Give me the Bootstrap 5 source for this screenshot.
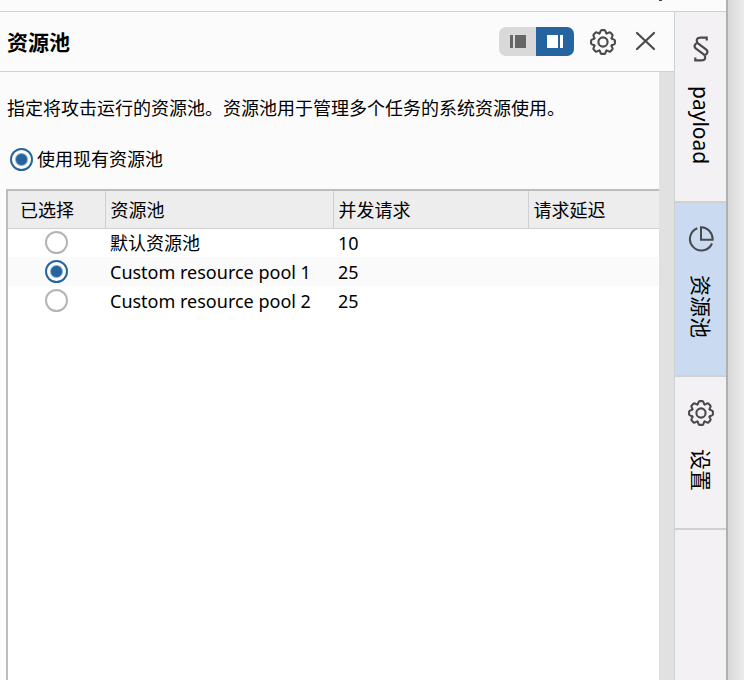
<!DOCTYPE html>
<html lang="zh-CN">
<head>
<meta charset="utf-8">
<meta name="viewport" content="width=device-width, initial-scale=1">
<title>资源池</title>
<link href="https://cdn.jsdelivr.net/npm/bootstrap@5.3.0/dist/css/bootstrap.min.css" rel="stylesheet">
<style>
  body { font-family: "Noto Sans", "Noto Sans CJK SC", sans-serif; font-size: 18px; line-height: 28px; color: #000; background: #e6e6e6; }
  .backdrop { background: linear-gradient(to left, #ececec, #d8d8d8 16px); padding-right: 16px; }
  .window { background: #fbfbfb; border-right: 2px solid #b0b0b0; }
  .top-strip { height: 12px; border-bottom: 1px solid #cbd3d0; padding-right: 64px; }
  .strip-mark { width: 3px; height: 1px; background: #444; }
  .pane-head { height: 60px; border-bottom: 1px solid #cbd3d0; padding: 0 16px 0 7px; }
  .pane-title { font-size: 21px; line-height: 28px; }
  .dock-btn { width: 38px; height: 29px; border: 0; border-radius: 7px; background: #d9d9d9; color: #666; }
  .dock-btn.active, .dock-btn:hover { background: #d9d9d9; }
  .dock-btn.active { background: #25649f !important; color: #fff; }
  .tool-btn { border: 0; color: #4a4a4a; }
  .pane-body { padding: 22px 0 0 6px; }
  .intro { margin-bottom: 23px; padding-left: 1px; }
  .track { width: 15px; background: #e1e1e1; }
  .pool-radio.form-check-input { width: 23px; height: 23px; margin: 0; border: 2px solid #b4b4b4; background: #fff; flex: none; float: none; display: block; box-shadow: none; }
  .pool-radio.form-check-input:checked { border-color: #25649f; background: radial-gradient(circle, #25649f 5px, #fff 7px); }
  .table-frame { border: solid #c0bcbe; border-width: 2px 0 0 2px; background: #fff; }
  .pool-table { table-layout: fixed; --bs-table-bg: transparent; }
  .pool-table th { height: 37px; padding: 2px 5px 0; font-weight: 400; background: #ededed; border-bottom: 1px solid #cfcfcf; border-right: 1px solid #cfcfcf; vertical-align: middle; color: #000; }
  .pool-table th:last-child { border-right: 0; }
  .pool-table th:first-child { padding-left: 12px; }
  .pool-table td { height: 29px; padding: 0 5px; line-height: 28px; border: 0; color: #000; white-space: nowrap; }
  .pool-table tbody tr:nth-child(2) td { background: #fafafa; }
  .col-select { width: 97px; }
  .col-pool { width: 228px; }
  .col-count { width: 195px; }
  .side-tabs { width: 52px; background: #f3f1f3; border-left: 1px solid #cbd3d0; }
  .side-tab { border: 0; border-bottom: 2px solid #d0d2d1; background: transparent; padding: 23px 0 37px; gap: 23px; color: #000; font-size: 21px; line-height: 28px; }
  .side-tab.active { background: #cadaf0; }
  .side-tab svg { color: #4a4a4a; }
  .tab-label { writing-mode: vertical-rl; text-orientation: sideways; }
</style>
</head>
<body>
<svg class="d-none" aria-hidden="true">
  <defs>
    <path id="tooth" d="M-3.56-8.59C-2.5-9.05-2.9-11.9-1.5-11.9L1.5-11.9C2.9-11.9 2.5-9.05 3.56-8.59"/>
    <symbol id="gear" viewBox="-13 -13 26 26">
      <g fill="none" stroke="currentColor" stroke-width="2.1" stroke-linecap="round">
        <use href="#tooth"/><use href="#tooth" transform="rotate(45)"/><use href="#tooth" transform="rotate(90)"/><use href="#tooth" transform="rotate(135)"/>
        <use href="#tooth" transform="rotate(180)"/><use href="#tooth" transform="rotate(225)"/><use href="#tooth" transform="rotate(270)"/><use href="#tooth" transform="rotate(315)"/>
        <circle r="4.6"/>
      </g>
    </symbol>
  </defs>
</svg>
<div class="backdrop vh-100 overflow-hidden">
  <div class="window h-100 d-flex flex-column">
    <div class="top-strip d-flex justify-content-end"><span class="strip-mark"></span></div>
    <div class="d-flex flex-grow-1">
      <main class="d-flex flex-column flex-grow-1">
        <header class="pane-head d-flex align-items-center">
          <h1 class="pane-title fw-bold m-0 me-auto">资源池</h1>
          <div class="btn-group" role="group" aria-label="面板位置">
            <button type="button" class="dock-btn btn p-0 d-flex align-items-center justify-content-center" aria-label="停靠左侧">
              <svg width="16" height="13" fill="currentColor"><path d="M0 0h3v13H0zM5 0h11v13H5z"/></svg>
            </button>
            <button type="button" class="dock-btn btn active p-0 d-flex align-items-center justify-content-center" aria-label="停靠右侧">
              <svg width="16" height="13" fill="currentColor"><path d="M0 0h11v13H0zM13 0h3v13h-3z"/></svg>
            </button>
          </div>
          <button type="button" class="tool-btn btn p-0 ms-3 d-flex" aria-label="设置"><svg width="26" height="26"><use href="#gear"/></svg></button>
          <button type="button" class="tool-btn btn p-0 ms-3 d-flex" aria-label="关闭">
            <svg width="26" height="26" fill="none" stroke="currentColor" stroke-width="2.2" stroke-linecap="round"><path d="M5 4L22 20M22 4L5 20"/></svg>
          </button>
        </header>
        <div class="d-flex flex-grow-1">
          <section class="pane-body d-flex flex-column flex-grow-1">
            <p class="intro">指定将攻击运行的资源池。资源池用于管理多个任务的系统资源使用。</p>
            <div class="d-flex align-items-center mb-3 ps-1">
              <input class="pool-radio form-check-input" type="radio" name="mode" id="existing" checked>
              <label class="ps-1" for="existing">使用现有资源池</label>
            </div>
            <div class="table-frame flex-grow-1">
              <table class="pool-table table table-borderless m-0">
                <thead>
                  <tr><th class="col-select" scope="col">已选择</th><th class="col-pool" scope="col">资源池</th><th class="col-count" scope="col">并发请求</th><th scope="col">请求延迟</th></tr>
                </thead>
                <tbody class="align-middle">
                  <tr><td><input class="pool-radio form-check-input mx-auto" type="radio" name="pool" id="pool0"></td><td><label for="pool0">默认资源池</label></td><td>10</td><td></td></tr>
                  <tr><td><input class="pool-radio form-check-input mx-auto" type="radio" name="pool" id="pool1" checked></td><td><label for="pool1">Custom resource pool 1</label></td><td>25</td><td></td></tr>
                  <tr><td><input class="pool-radio form-check-input mx-auto" type="radio" name="pool" id="pool2"></td><td><label for="pool2">Custom resource pool 2</label></td><td>25</td><td></td></tr>
                </tbody>
              </table>
            </div>
          </section>
          <div class="track flex-shrink-0"></div>
        </div>
      </main>
      <nav class="side-tabs d-flex flex-column flex-shrink-0" aria-label="侧边标签">
        <button type="button" class="side-tab d-flex flex-column align-items-center">
          <svg width="18" height="28" fill="none" stroke="currentColor" stroke-width="2.2"><path d="M14.7 5.6V2.7H8.5C4 2.7 4 6.5 6 8.3L14 14.3C16.8 16.5 15 19.5 12.6 20M3.3 22.4V25.3H9.5C14 25.3 14 21.5 12 19.7L4 13.7C1.2 11.5 3 8.5 5.4 8"/></svg>
          <span class="tab-label">payload</span>
        </button>
        <button type="button" class="side-tab active d-flex flex-column align-items-center">
          <svg width="26" height="26" fill="none" stroke="currentColor" stroke-width="2"><path d="M9.3 2.2A11.5 11.5 0 1 0 24 17.5M13 1.3V13.7H24.6A11.8 11.8 0 0 0 13 1.3Z"/></svg>
          <span class="tab-label">资源池</span>
        </button>
        <button type="button" class="side-tab d-flex flex-column align-items-center"><svg width="26" height="26"><use href="#gear"/></svg><span class="tab-label">设置</span></button>
      </nav>
    </div>
  </div>
</div>
<script src="https://cdn.jsdelivr.net/npm/bootstrap@5.3.0/dist/js/bootstrap.bundle.min.js"></script>
</body>
</html>
